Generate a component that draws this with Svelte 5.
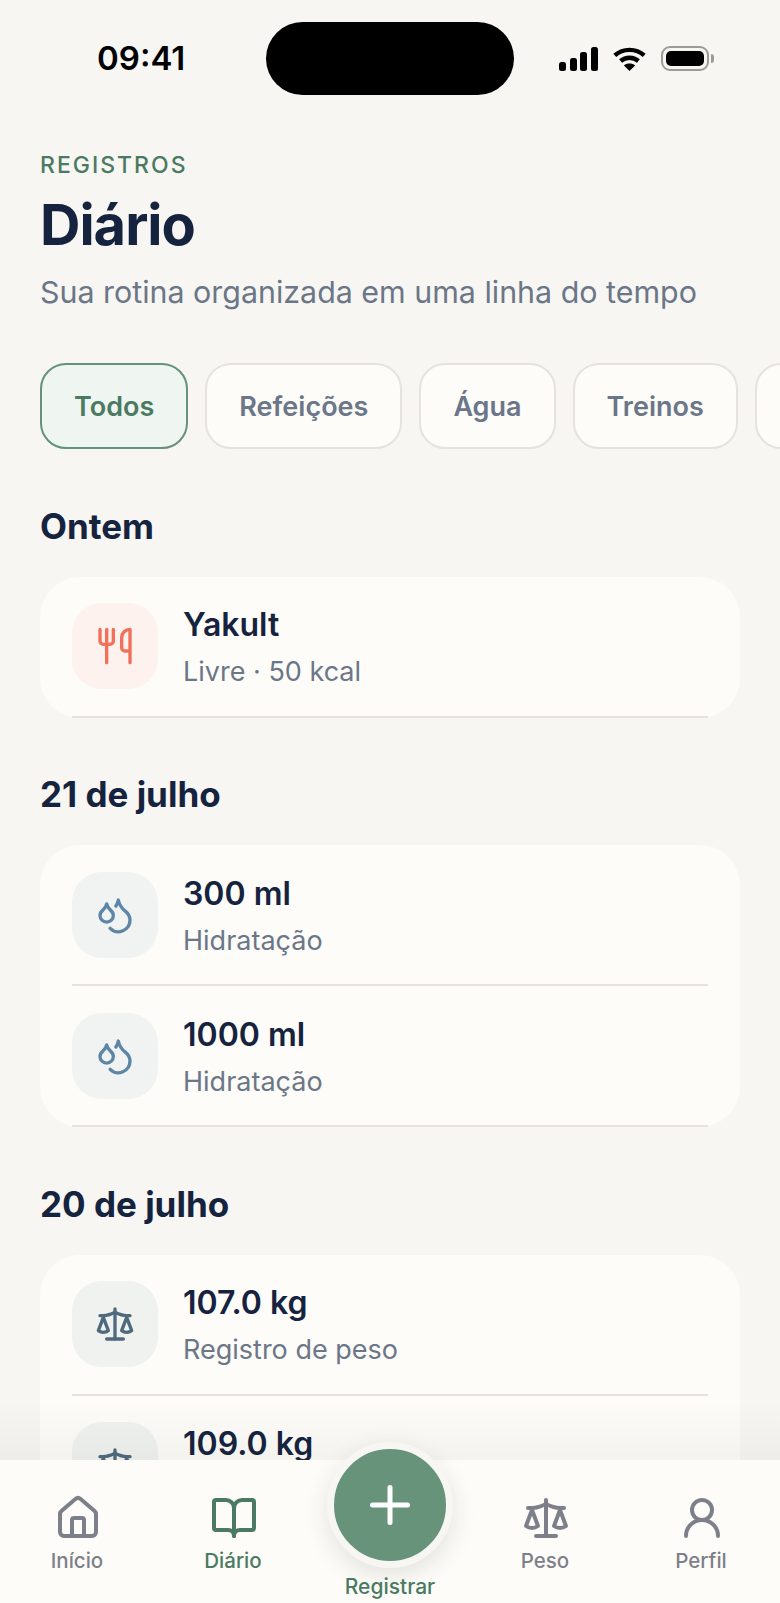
<script lang="ts">
  const chips = ["Todos", "Refeições", "Água", "Treinos", "Peso"];

  const sections = [
    { title: "Ontem", rows: [{ kind: "food", name: "Yakult", sub: "Livre · 50 kcal" }] },
    {
      title: "21 de julho",
      rows: [
        { kind: "water", name: "300 ml", sub: "Hidratação" },
        { kind: "water", name: "1000 ml", sub: "Hidratação" },
      ],
    },
    {
      title: "20 de julho",
      rows: [
        { kind: "weight", name: "107.0 kg", sub: "Registro de peso" },
        { kind: "weight", name: "109.0 kg", sub: "Registro de peso" },
      ],
    },
  ];
</script>

{#snippet scale()}
  <path d="m16 16 3-8 3 8c-.87.65-1.92 1-3 1s-2.13-.35-3-1Z" />
  <path d="m2 16 3-8 3 8c-.87.65-1.92 1-3 1s-2.13-.35-3-1Z" />
  <path d="M7 21h10" />
  <path d="M12 3v18" />
  <path d="M3 7h2c2 0 5-1 7-2 2 1 5 2 7 2h2" />
{/snippet}

<div class="phone">
  <header class="status">
    <span class="time">09:41</span>
    <div class="island"></div>
    <div class="indicators">
      <svg class="signal" width="39" height="24" viewBox="0 0 39 24" fill="currentColor">
        <rect x="0" y="15" width="7" height="9" rx="2.5" />
        <rect x="11" y="11" width="7" height="13" rx="2.5" />
        <rect x="21" y="5" width="7" height="19" rx="2.5" />
        <rect x="32" y="0" width="7" height="24" rx="2.5" />
      </svg>
      <svg class="wifi" width="33" height="24" viewBox="0 0 33 24" fill="none" stroke="currentColor" stroke-width="4.4">
        <path d="M1.8 8.4C10 1 23 1 31.2 8.4" />
        <path d="M7.6 14C12.6 9.6 20.4 9.6 25.4 14" />
        <path d="M16.5 24l-5.6-5.6c3-2.6 8.200-2.600 11.200 0z" fill="currentColor" stroke="none" />
      </svg>
      <div class="battery"><div class="charge"></div></div>
    </div>
  </header>

  <main>
    <p class="eyebrow">REGISTROS</p>
    <h1>Diário</h1>
    <p class="subtitle">Sua rotina organizada em uma linha do tempo</p>

    <div class="chips">
      {#each chips as chip, i}
        <button class="chip" class:active={i === 0}>{chip}</button>
      {/each}
    </div>

    {#each sections as section}
      <h2>{section.title}</h2>
      <div class="card">
        {#each section.rows as row}
          <div class="row">
            <div class="icon {row.kind}">
              <svg width="40" height="40" viewBox="0 0 24 24" fill="none" stroke="currentColor" stroke-width="2" stroke-linecap="round" stroke-linejoin="round">
                {#if row.kind === "food"}
                  <path d="M3 2v7c0 1.100.9 2 2 2h4a2 2 0 0 0 2-2V2" />
                  <path d="M7 2v20" />
                  <path d="M21 15V2a5 5 0 0 0-5 5v6c0 1.100.9 2 2 2h3Zm0 0v7" />
                {:else if row.kind === "water"}
                  <path d="M7 16.300c2.200 0 4-1.830 4-4.050 0-1.160-.57-2.260-1.710-3.190S7.290 6.750 7 5.300c-.29 1.450-1.140 2.840-2.290 3.760S3 11.100 3 12.250c0 2.220 1.800 4.050 4 4.050z" />
                  <path d="M12.560 6.600A10.970 10.970 0 0 0 14 3.020c.5 2.500 2 4.900 4 6.500s3 3.500 3 5.500a6.980 6.980 0 0 1-11.910 4.970" />
                {:else}
                  {@render scale()}
                {/if}
              </svg>
            </div>
            <div class="text">
              <div class="name">{row.name}</div>
              <div class="sub">{row.sub}</div>
            </div>
          </div>
        {/each}
      </div>
    {/each}
  </main>

  <nav class="tabbar">
    <div class="tab">
      <svg width="48" height="48" viewBox="0 0 24 24" fill="none" stroke="currentColor" stroke-width="2" stroke-linecap="round" stroke-linejoin="round">
        <path d="M15 21v-8a1 1 0 0 0-1-1h-4a1 1 0 0 0-1 1v8" />
        <path d="M3 10a2 2 0 0 1 .709-1.528l7-5.999a2 2 0 0 1 2.582 0l7 5.999A2 2 0 0 1 21 10v9a2 2 0 0 1-2 2H5a2 2 0 0 1-2-2z" />
      </svg>
      <span>Início</span>
    </div>
    <div class="tab current">
      <svg width="48" height="48" viewBox="0 0 24 24" fill="none" stroke="currentColor" stroke-width="2" stroke-linecap="round" stroke-linejoin="round">
        <path d="M12 7v14" />
        <path d="M3 18a1 1 0 0 1-1-1V4a1 1 0 0 1 1-1h5a4 4 0 0 1 4 4 4 4 0 0 1 4-4h5a1 1 0 0 1 1 1v13a1 1 0 0 1-1 1h-6a3 3 0 0 0-3 3 3 3 0 0 0-3-3z" />
      </svg>
      <span>Diário</span>
    </div>
    <div class="tab add">
      <div class="fab">
        <svg width="60" height="60" viewBox="0 0 24 24" fill="none" stroke="#fff" stroke-width="2" stroke-linecap="round">
          <path d="M5 12h14" />
          <path d="M12 5v14" />
        </svg>
      </div>
      <span>Registrar</span>
    </div>
    <div class="tab">
      <svg width="48" height="48" viewBox="0 0 24 24" fill="none" stroke="currentColor" stroke-width="2" stroke-linecap="round" stroke-linejoin="round">
        {@render scale()}
      </svg>
      <span>Peso</span>
    </div>
    <div class="tab">
      <svg width="48" height="48" viewBox="0 0 24 24" fill="none" stroke="currentColor" stroke-width="2" stroke-linecap="round" stroke-linejoin="round">
        <circle cx="12" cy="8" r="5" />
        <path d="M20 21a8 8 0 0 0-16 0" />
      </svg>
      <span>Perfil</span>
    </div>
  </nav>
</div>

<style>
  :global(body) {
    margin: 0;
    background: #f7f6f2;
  }
  .phone {
    position: relative;
    width: 780px;
    height: 1603px;
    overflow: hidden;
    background: #f7f6f2;
    font-family: Inter, "Liberation Sans", sans-serif;
    color: #15233f;
  }

  .status {
    display: grid;
    grid-template-columns: 1fr 248px 1fr;
    align-items: center;
    padding-top: 22px;
    height: 73px;
    color: #000;
  }
  .time {
    justify-self: start;
    margin-left: 97px;
    margin-top: -2px;
    font-size: 33px;
    font-weight: 600;
    line-height: 40px;
  }
  .island {
    height: 73px;
    border-radius: 37px;
    background: #000;
  }
  .indicators {
    display: flex;
    align-items: center;
    margin-left: 45px;
  }
  .wifi {
    margin-left: 15px;
  }
  .battery {
    position: relative;
    box-sizing: border-box;
    width: 48px;
    height: 25px;
    margin-left: 15px;
    padding: 3px;
    border: 2px solid #9c9b96;
    border-radius: 9px;
  }
  .battery::after {
    content: "";
    position: absolute;
    right: -7px;
    top: 6px;
    width: 3px;
    height: 9px;
    border-radius: 0 3px 3px 0;
    background: #9c9b96;
  }
  .charge {
    height: 100%;
    border-radius: 5px;
    background: #000;
  }

  main {
    padding: 0 40px;
  }
  .eyebrow {
    margin: 57px 0 0;
    font-size: 23px;
    line-height: 26px;
    font-weight: 500;
    letter-spacing: 2px;
    color: #4a7a62;
  }
  h1 {
    margin: 15px 0 0;
    font-size: 56px;
    line-height: 64px;
    font-weight: 700;
    letter-spacing: -1px;
  }
  .subtitle {
    margin: 15px 0 0;
    font-size: 30.4px;
    line-height: 40px;
    color: #6b7688;
  }

  .chips {
    display: flex;
    gap: 17px;
    margin: 51px -40px 0 0;
  }
  .chip {
    flex: none;
    box-sizing: border-box;
    height: 86px;
    padding: 0 32px;
    border: 2px solid #e5e3dc;
    border-radius: 26px;
    background: #fdfcf8;
    font: 600 27px Inter, "Liberation Sans", sans-serif;
    color: #6b7688;
  }
  .chip.active {
    background: #eff5f0;
    border-color: #66917a;
    color: #4a7a62;
  }

  h2 {
    margin: 55.5px 0 30px;
    font-size: 35px;
    line-height: 42px;
    font-weight: 700;
  }
  .card {
    padding: 0 32px;
    border-radius: 40px;
    background: #fdfcf8;
  }
  .row {
    display: flex;
    align-items: center;
    gap: 25px;
    height: 139px;
    border-bottom: 2px solid #e5e3dc;
  }
  .icon {
    flex: none;
    display: flex;
    align-items: center;
    justify-content: center;
    width: 86px;
    height: 86px;
    border-radius: 30px;
  }
  .icon.food {
    background: #fdf2ee;
    color: #f0705a;
  }
  .icon.water {
    background: #f1f3f3;
    color: #5d86a6;
  }
  .icon.weight {
    background: #f0f2f0;
    color: #4f6a7c;
  }
  .text {
    padding-top: 3px;
  }
  .name {
    font-size: 32px;
    line-height: 40px;
    font-weight: 600;
  }
  .sub {
    margin-top: 9px;
    font-size: 27px;
    line-height: 36px;
    color: #6b7688;
  }

  .tabbar {
    position: absolute;
    left: 0;
    right: 0;
    bottom: 0;
    height: 143px;
    display: grid;
    grid-template-columns: repeat(5, 1fr);
    background: #fdfcf8;
  }
  .tabbar::before {
    content: "";
    position: absolute;
    left: 0;
    right: 0;
    bottom: 100%;
    height: 60px;
    background: linear-gradient(to bottom, rgba(40, 40, 25, 0), rgba(40, 40, 25, 0.045));
    pointer-events: none;
  }
  .tab {
    position: relative;
    display: flex;
    flex-direction: column;
    align-items: center;
    padding-top: 34px;
    color: #7d808a;
  }
  .tab span {
    margin: 6px 2px 0 0;
    font-size: 20.5px;
    line-height: 26px;
    font-weight: 500;
  }
  .tab.current {
    color: #4a7a62;
  }
  .tab.add {
    padding-top: 0;
    color: #4a7a62;
  }
  .tab.add span {
    margin: 6px 0 0;
    font-size: 21px;
  }
  .fab {
    display: flex;
    align-items: center;
    justify-content: center;
    box-sizing: border-box;
    width: 126px;
    height: 126px;
    margin-top: -18px;
    border: 7px solid #f7f6f2;
    border-radius: 50%;
    background: #67937b;
    box-shadow: 0 8px 24px rgba(40, 50, 45, 0.12);
  }
</style>
